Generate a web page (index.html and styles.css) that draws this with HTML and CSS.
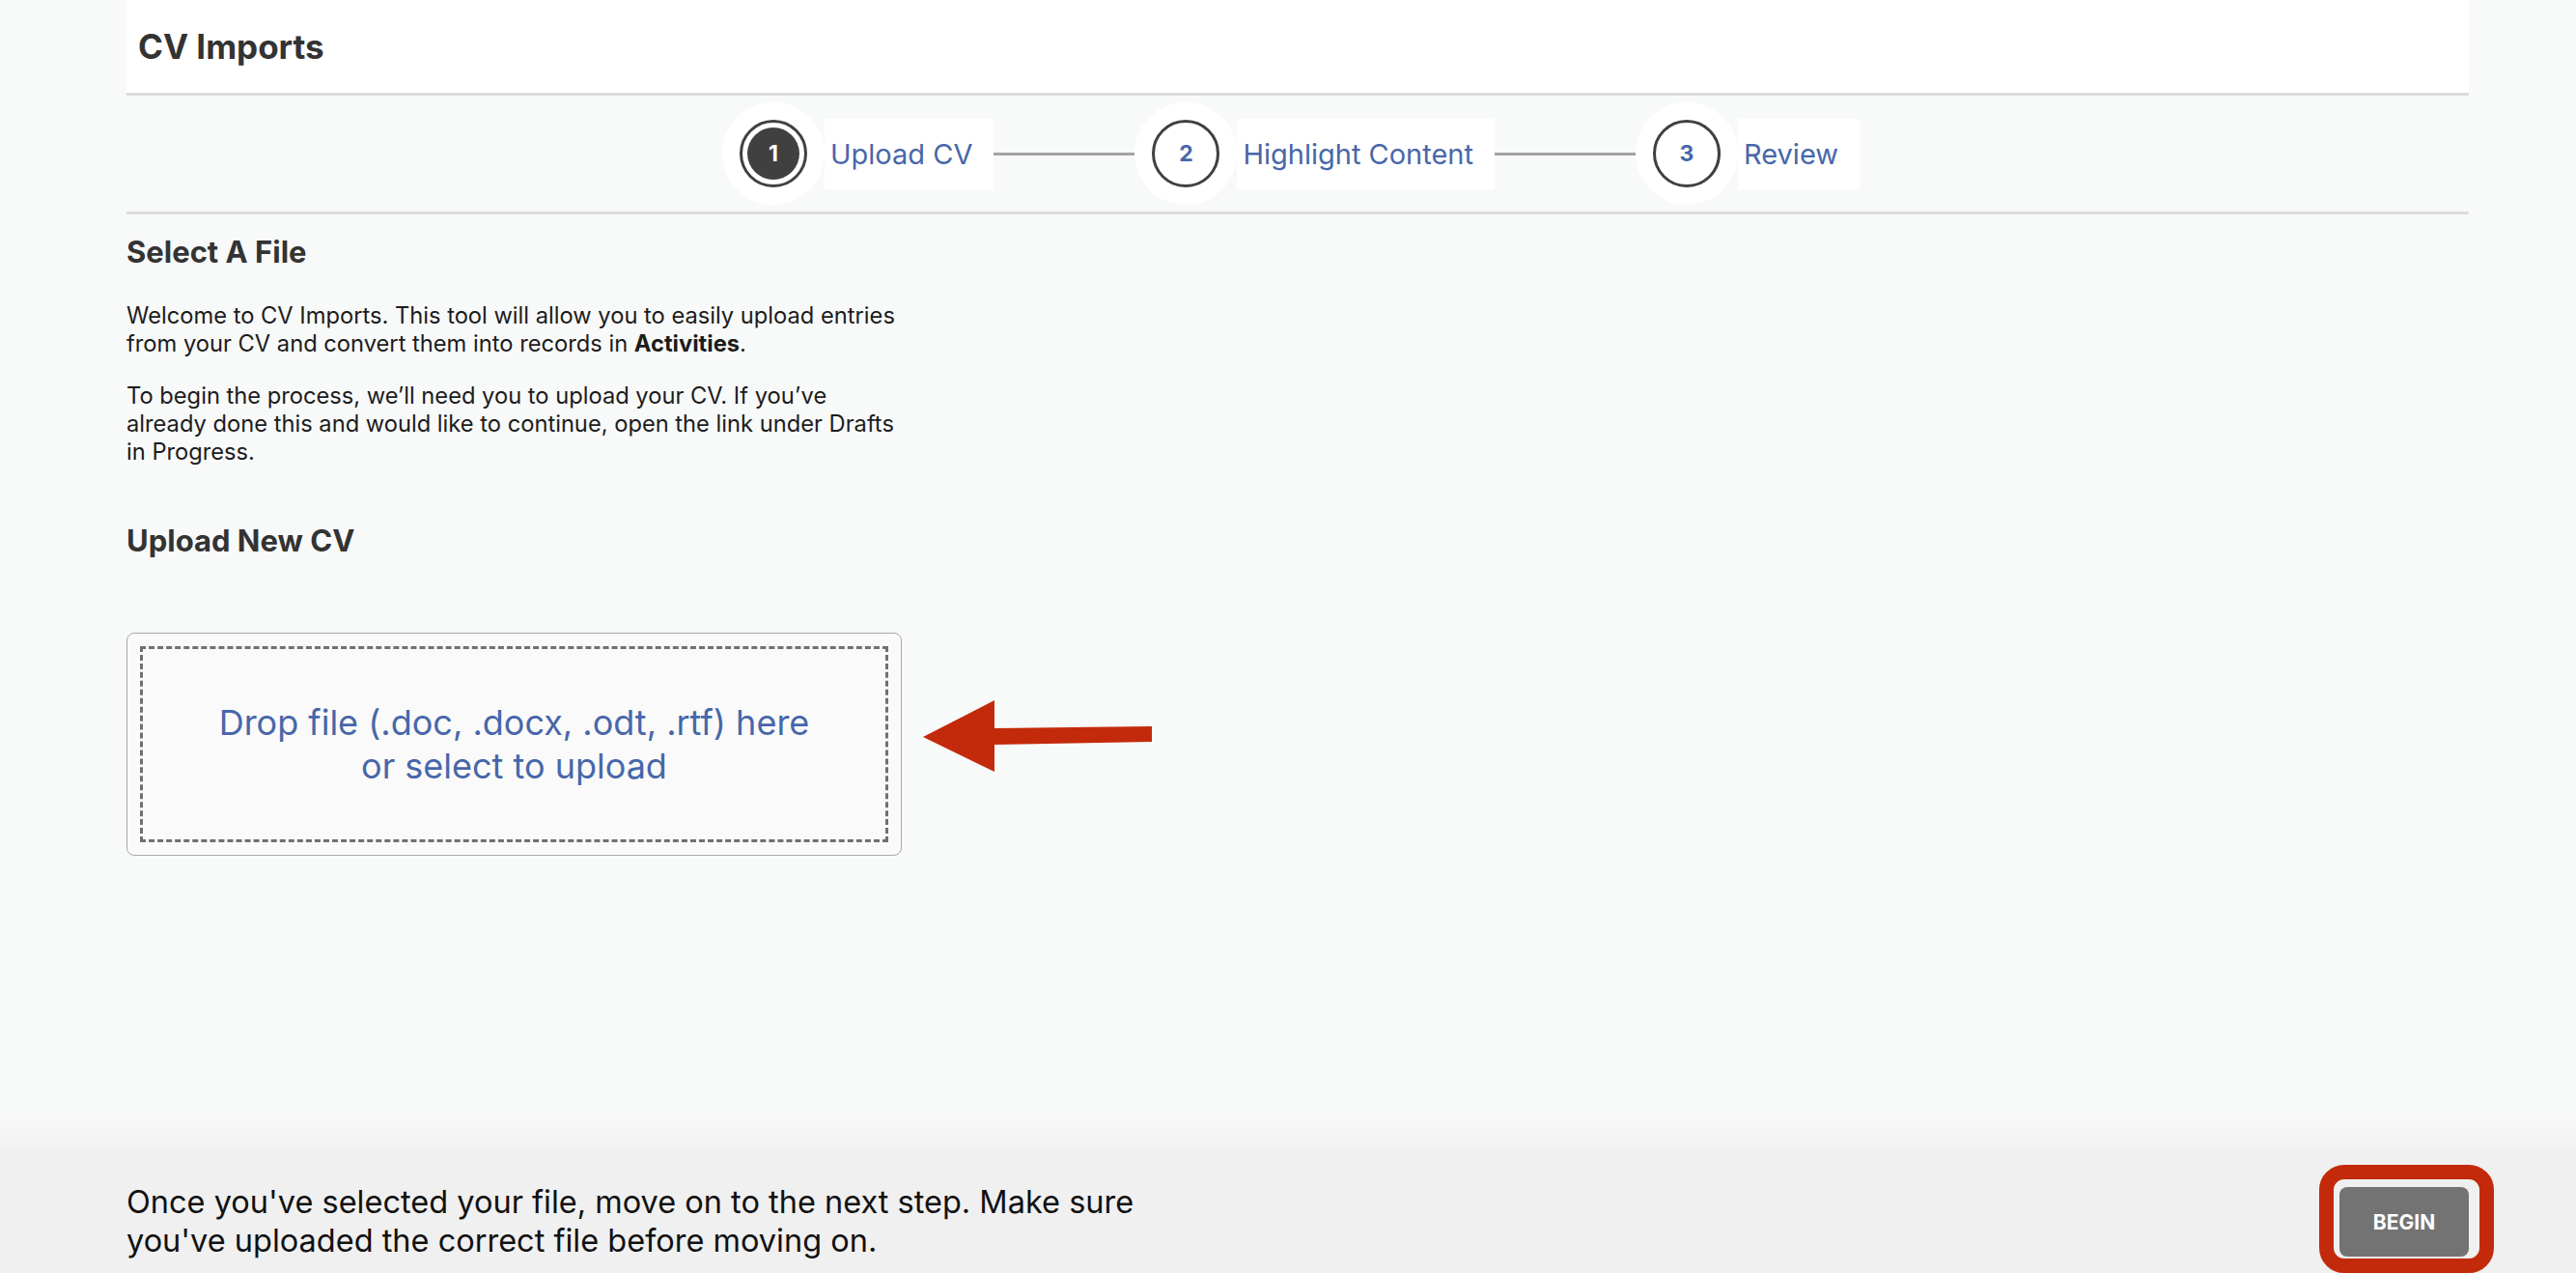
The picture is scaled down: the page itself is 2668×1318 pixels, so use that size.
FILE: index.html
```html
<!DOCTYPE html>
<html>

<head>
    <meta charset="UTF-8">
    <meta name="viewport" content="width=device-width, initial-scale=1.0">
    <title>CV Imports</title>
    <link rel="stylesheet" href="styles.css">
</head>

<body>
    <div class="page">

        <!-- =========== Main =========== -->
        <div class="main">
            <div class="topbar">
                <h1>CV Imports</h1>
            </div>

            <!-- =========== Steps =========== -->
            <div class="steps">
                <div class="step active">
                    <div class="bubble">
                        <div class="circle"><span class="num">1</span></div>
                    </div>
                    <span class="label">Upload CV</span>
                </div>
                <div class="line"></div>
                <div class="step">
                    <div class="bubble">
                        <div class="circle"><span class="num">2</span></div>
                    </div>
                    <span class="label">Highlight Content</span>
                </div>
                <div class="line"></div>
                <div class="step">
                    <div class="bubble">
                        <div class="circle"><span class="num">3</span></div>
                    </div>
                    <span class="label">Review</span>
                </div>
            </div>

            <!-- =========== Content =========== -->
            <div class="content">
                <h2>Select A File</h2>
                <p>Welcome to CV Imports. This tool will allow you to easily upload entries from your CV and convert them into records in <b>Activities</b>.</p>
                <p>To begin the process, we’ll need you to upload your CV. If you’ve<br>already done this and would like to continue, open the link under Drafts in Progress.</p>

                <h2 class="uploadTitle">Upload New CV</h2>
                <div class="upload">
                    <div class="dropzone">
                        <div class="dropInner">Drop file (.doc, .docx, .odt, .rtf) here<br>or select to upload</div>
                    </div>
                    <svg class="arrow" width="237" height="74" viewBox="0 0 237 74">
                        <polygon points="0,38 74,0 74,29 237,27 237,43 74,46 74,74" fill="#c32a0b" />
                    </svg>
                </div>
            </div>
        </div>

        <!-- =========== Footer =========== -->
        <div class="footer">
            <p>Once you've selected your file, move on to the next step. Make sure you've uploaded the correct file before moving on.</p>
            <div class="beginWrap">
                <button class="begin">BEGIN</button>
            </div>
        </div>
    </div>
</body>

</html>
```

FILE: styles.css
```css
* {
    font-family: "Inter", "Liberation Sans", sans-serif;
    margin: 0;
    padding: 0;
    box-sizing: border-box;
}

:root {
    --bg: #f8f9f9;
    --white: #fff;
    --line: #dcdcdc;
    --dark: #404040;
    --blue: #4767a9;
    --red: #c32a0b;
}

body {
    background: var(--bg);
    min-height: 100vh;
    overflow: hidden;
}

.page {
    display: flex;
    flex-direction: column;
    min-height: 100vh;
}

.main {
    flex: 1;
    margin: 0 111px 0 131px;
}

.topbar {
    height: 99px;
    background: var(--white);
    border-bottom: 3px solid var(--line);
    display: flex;
    align-items: center;
    padding: 0 12px;
}

.topbar h1 {
    font-size: 35px;
    font-weight: 700;
    color: #333;
}

/* steps */
.steps {
    height: 123px;
    border-bottom: 3px solid var(--line);
    display: flex;
    justify-content: center;
    align-items: center;
    padding-right: 14px;
}

.step {
    display: flex;
    align-items: center;
}

.bubble {
    width: 106px;
    height: 106px;
    border-radius: 50%;
    background: var(--white);
    display: flex;
    align-items: center;
    justify-content: center;
}

.circle {
    width: 70px;
    height: 70px;
    border-radius: 50%;
    border: 3px solid var(--dark);
    display: flex;
    align-items: center;
    justify-content: center;
}

.num {
    font-size: 23px;
    font-weight: 700;
    color: var(--blue);
}

.step.active .num {
    width: 54px;
    height: 54px;
    border-radius: 50%;
    background: var(--dark);
    color: var(--white);
    display: flex;
    align-items: center;
    justify-content: center;
}

.label {
    height: 73px;
    background: var(--white);
    display: flex;
    align-items: center;
    padding: 0 22px 0 6px;
    font-size: 29px;
    color: var(--blue);
}

.line {
    width: 146px;
    height: 3px;
    background: #a3a3a3;
}

/* content */
.content h2 {
    font-size: 31px;
    line-height: 36px;
    font-weight: 700;
    color: #333;
    margin-top: 21px;
}

.content p {
    width: 810px;
    font-size: 23.7px;
    line-height: 29px;
    color: #1c1c1c;
    margin-top: 33px;
}

.content p + p {
    margin-top: 25px;
}

.content h2.uploadTitle {
    margin-top: 60px;
}

.upload {
    position: relative;
    margin-top: 77px;
}

.dropzone {
    width: 803px;
    height: 231px;
    background: #fafafa;
    border: 1px solid #a8a8a8;
    border-radius: 8px;
    padding: 13px;
}

.dropInner {
    height: 100%;
    border: 3px dashed #707070;
    display: flex;
    align-items: center;
    justify-content: center;
    text-align: center;
    font-size: 36px;
    line-height: 45px;
    color: var(--blue);
}

.arrow {
    position: absolute;
    left: 825px;
    top: 70px;
}

/* footer */
.footer {
    height: 127px;
    background: #f0f0f0;
    box-shadow: 0 0 30px 15px #f0f0f0;
    display: flex;
    justify-content: space-between;
    align-items: center;
    padding: 34px 111px 13px 131px;
}

.footer p {
    width: 1100px;
    font-size: 32.5px;
    line-height: 40px;
    color: #111;
}

.beginWrap {
    position: relative;
}

.beginWrap::after {
    content: '';
    position: absolute;
    left: -21px;
    top: -23px;
    right: -26px;
    bottom: -17px;
    border: 15px solid var(--red);
    border-radius: 26px;
    pointer-events: none;
}

.begin {
    width: 134px;
    height: 72px;
    background: #737373;
    border: none;
    border-radius: 8px;
    color: var(--white);
    font-size: 21px;
    font-weight: 700;
}
```
